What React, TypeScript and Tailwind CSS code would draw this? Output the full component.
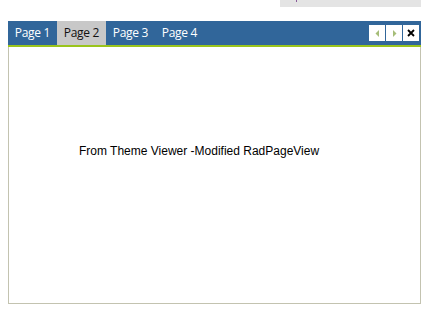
import React from 'react';

function App() {
  const tabs = ['Page 1', 'Page 2', 'Page 3', 'Page 4'];
  return (
    <div className="w-[435px] h-[317px] bg-white relative font-['Open_Sans',sans-serif]">
      {/* top gray strip */}
      <div className="absolute left-[280px] top-0 w-[141px] h-[7px] bg-[#e4e4e4]">
        <div className="absolute left-[16px] top-0 w-[1px] h-[2px] bg-[#8a5a9a]" />
      </div>

      <div className="absolute left-[8px] top-[21px] w-[413px] h-[283px] flex flex-col">
        {/* tab strip */}
        <div className="h-[24px] bg-[#31669a] flex items-stretch">
          {tabs.map((t, i) => (
            <div
              key={t}
              className={
                i === 1
                  ? 'w-[49px] whitespace-nowrap flex items-center justify-center text-[12px] tracking-[-0.3px] text-[#111] bg-[#c8c8c8]'
                  : 'w-[49px] whitespace-nowrap flex items-center justify-center text-[12px] tracking-[-0.3px] text-white'
              }
            >
              {t}
            </div>
          ))}
          <div className="ml-auto flex items-center gap-[1px] pr-[2px]">
            <div className="w-[16px] h-[16px] bg-white flex items-center justify-center">
              <svg width="7" height="7" viewBox="0 0 7 7">
                <path d="M5 0 L5 7 L1.5 3.5 Z" fill="#a6bd78" />
              </svg>
            </div>
            <div className="w-[16px] h-[16px] bg-white flex items-center justify-center">
              <svg width="7" height="7" viewBox="0 0 7 7">
                <path d="M2 0 L2 7 L5.5 3.5 Z" fill="#a6bd78" />
              </svg>
            </div>
            <div className="w-[16px] h-[16px] bg-white flex items-center justify-center">
              <svg width="8" height="8" viewBox="0 0 8 8">
                <path d="M1 1 L7 7 M7 1 L1 7" stroke="#000" strokeWidth="1.8" />
              </svg>
            </div>
          </div>
        </div>
        <div className="h-[2px] bg-[#9ac41c]" />
        {/* content */}
        <div className="flex-1 border-x border-b border-[#c3c3b0] pl-[70px] pt-[96px]">
          <p className="font-['Liberation_Sans',Arial,sans-serif] text-[12px] text-black leading-[16px]">
            From Theme Viewer -Modified RadPageView
          </p>
        </div>
      </div>
    </div>
  );
}

export default App;
